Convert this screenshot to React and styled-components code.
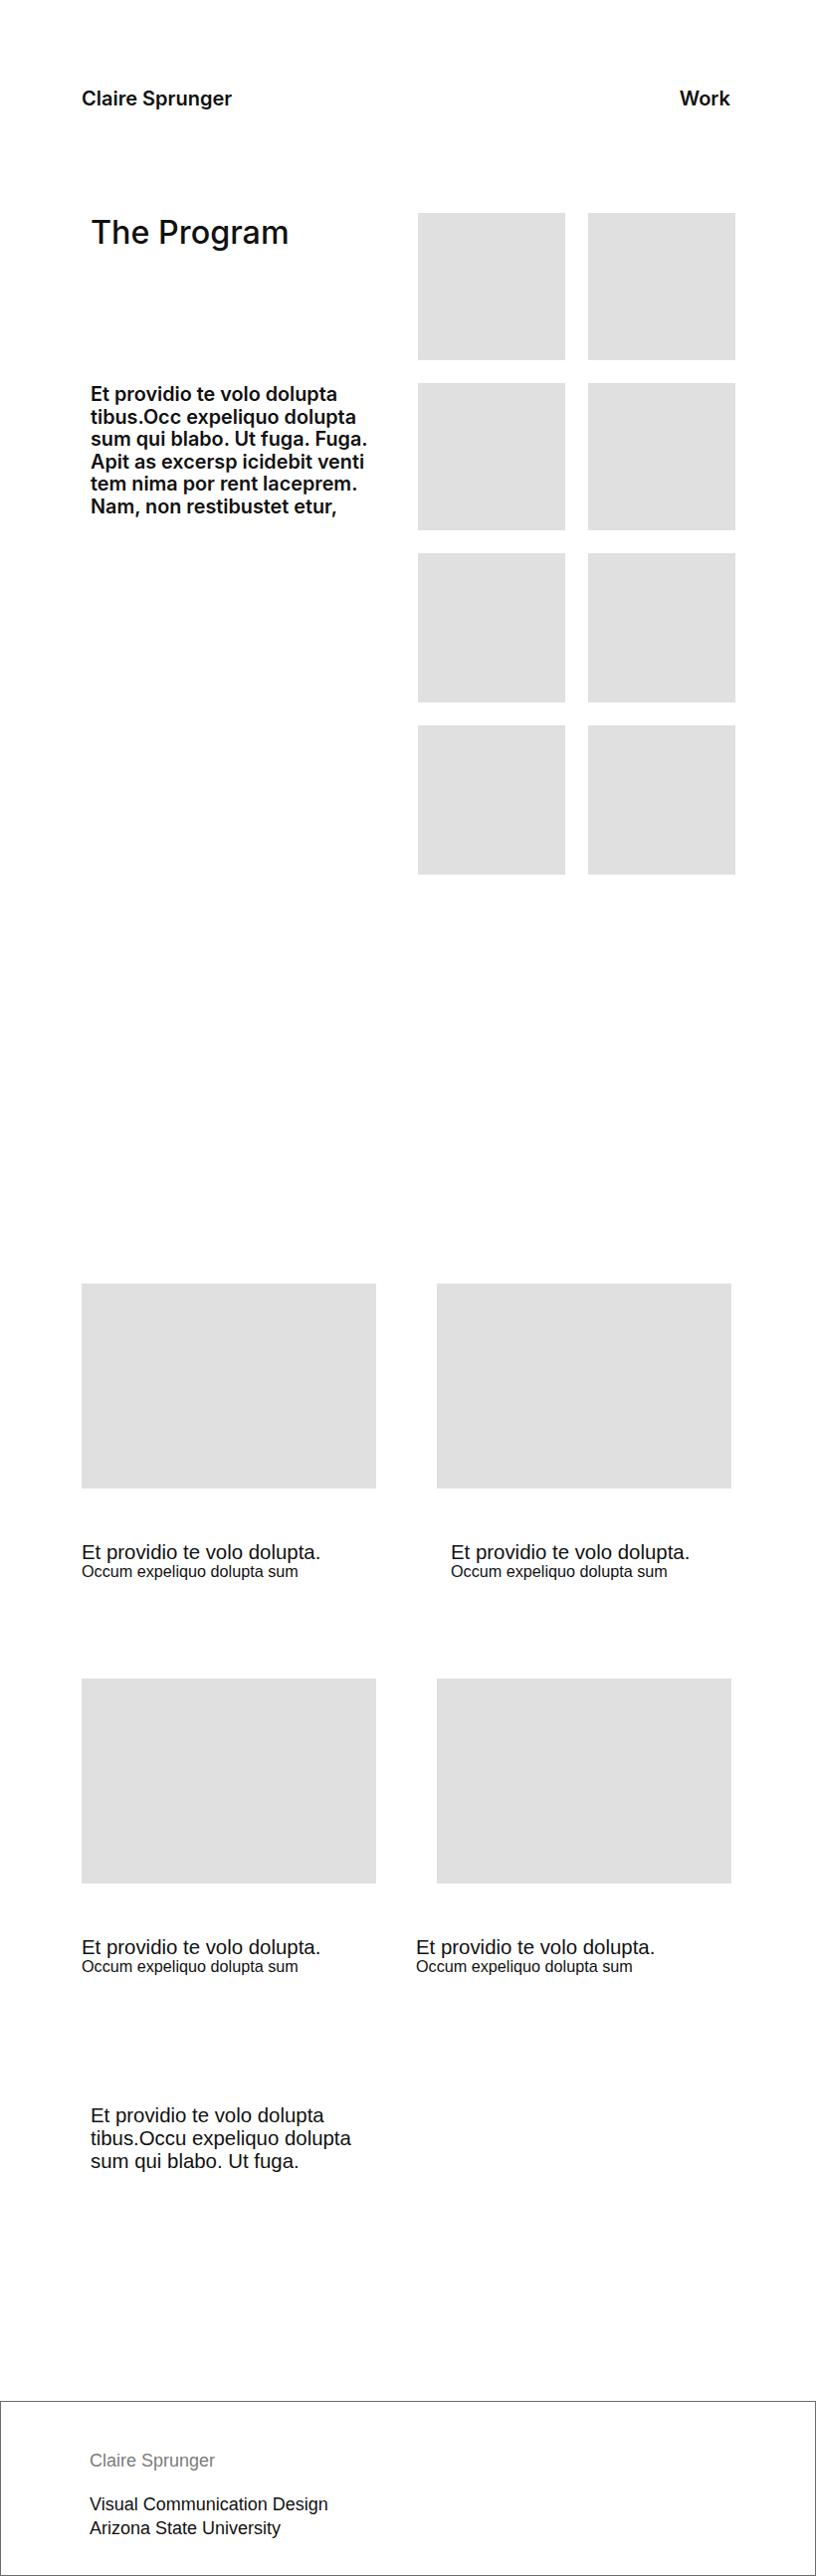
import React from "react";
import styled, { createGlobalStyle } from "styled-components";

const GlobalStyle = createGlobalStyle`
  html, body { margin: 0; padding: 0; background: #ffffff; }
  body { font-family: "Liberation Sans", Arial, sans-serif; color: #111111; }
  * { box-sizing: border-box; }
`;

const Page = styled.div`
  width: 100%;
  display: flex;
  flex-direction: column;
`;

const Header = styled.header`
  display: flex;
  justify-content: space-between;
  align-items: baseline;
  padding: 87px 86px 0 82px;
  font-family: Inter, "Noto Sans", sans-serif;
  font-weight: 600;
  font-size: 20px;
  line-height: 24px;
  color: #111;
`;

const Brand = styled.div``;
const NavLink = styled.a`
  color: inherit;
  text-decoration: none;
`;

const Hero = styled.section`
  display: grid;
  grid-template-columns: 306px 148px 148px;
  grid-template-rows: 148px 148px 150px 150px;
  column-gap: 23px;
  row-gap: 23px;
  margin-top: 103px;
  padding-left: 91px;
`;

const Title = styled.h1`
  grid-column: 1;
  grid-row: 1;
  margin: 0;
  font-family: Inter, "Noto Sans", sans-serif;
  font-weight: 500;
  font-size: 32.3px;
  line-height: 40px;
  color: #111;
`;

const Lead = styled.p`
  grid-column: 1;
  grid-row: 2 / span 3;
  margin: 0;
  font-family: Inter, "Noto Sans", sans-serif;
  font-weight: 600;
  font-size: 19.8px;
  line-height: 22.5px;
  color: #111;
`;

const Thumb = styled.div`
  background: #e0e0e0;
`;

const Projects = styled.section`
  display: flex;
  flex-direction: column;
  gap: 98px;
  margin-top: 411px;
`;

const ProjectRow = styled.div`
  display: grid;
  grid-template-columns: 296px 296px;
  column-gap: 61px;
  padding-left: 82px;
`;

const Card = styled.article`
  display: flex;
  flex-direction: column;
`;

const CardImage = styled.div`
  height: 206px;
  background: #e0e0e0;
`;

const Caption = styled.div`
  margin-top: 54px;
  margin-left: ${(p) => p.$offset || 0}px;
  white-space: nowrap;
`;

const CaptionTitle = styled.div`
  font-size: 20.4px;
  line-height: 20px;
  color: #111;
`;

const CaptionSub = styled.div`
  font-size: 16.2px;
  line-height: 19px;
  color: #111;
`;

const Outro = styled.p`
  margin: 129px 0 0 0;
  padding-left: 91px;
  font-size: 20.4px;
  line-height: 23px;
  color: #111;
`;

const Footer = styled.footer`
  margin-top: 229px;
  border: 1px solid #6b6b6b;
  padding: 47px 0 35px 89px;
  font-size: 18px;
  line-height: 24px;
  color: #111;
`;

const FooterName = styled.div`
  color: #7c7c7c;
  margin-bottom: 20px;
`;

const FooterLine = styled.div``;

const projectRows = [
  [0, 14],
  [0, -21],
];

export default function App() {
  return (
    <>
      <GlobalStyle />
      <Page>
        <Header>
          <Brand>Claire Sprunger</Brand>
          <NavLink href="#">Work</NavLink>
        </Header>

        <Hero>
          <Title>The Program</Title>
          <Lead>
            Et providio te volo dolupta
            <br />
            tibus.Occ expeliquo dolupta
            <br />
            sum qui blabo. Ut fuga. Fuga.
            <br />
            Apit as excersp icidebit venti
            <br />
            tem nima por rent laceprem.
            <br />
            Nam, non restibustet etur,
          </Lead>
          {Array.from({ length: 8 }).map((_, i) => (
            <Thumb key={i} />
          ))}
        </Hero>

        <Projects>
          {projectRows.map((offsets, r) => (
            <ProjectRow key={r}>
              {offsets.map((off, c) => (
                <Card key={c}>
                  <CardImage />
                  <Caption $offset={off}>
                    <CaptionTitle>Et providio te volo dolupta.</CaptionTitle>
                    <CaptionSub>Occum expeliquo dolupta sum</CaptionSub>
                  </Caption>
                </Card>
              ))}
            </ProjectRow>
          ))}
        </Projects>

        <Outro>
          Et providio te volo dolupta
          <br />
          tibus.Occu expeliquo dolupta
          <br />
          sum qui blabo. Ut fuga.
        </Outro>

        <Footer>
          <FooterName>Claire Sprunger</FooterName>
          <FooterLine>Visual Communication Design</FooterLine>
          <FooterLine>Arizona State University</FooterLine>
        </Footer>
      </Page>
    </>
  );
}
